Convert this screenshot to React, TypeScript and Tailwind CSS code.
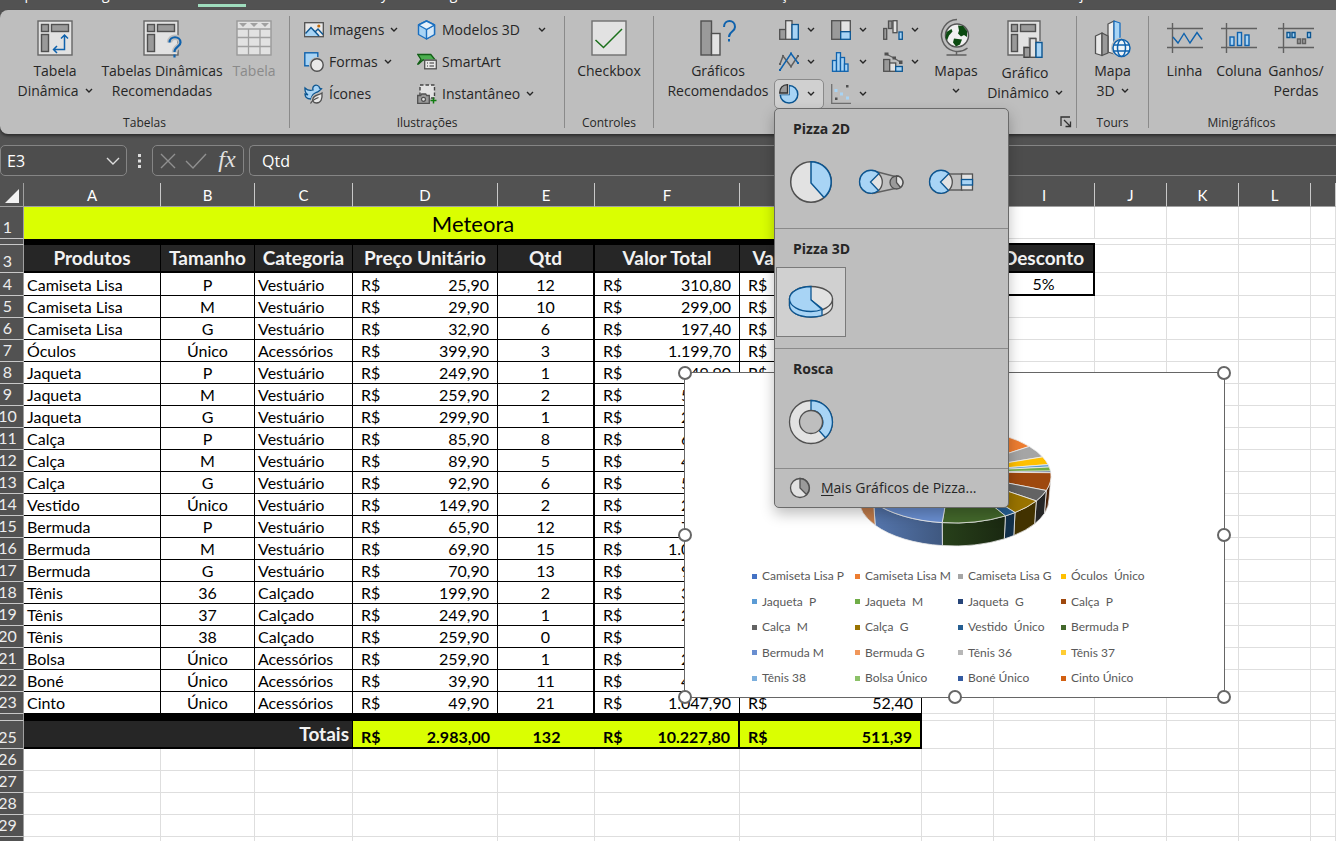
import React from 'react';
import clsx from 'clsx';

const TABS = ['Arquivo', 'Página Inicial', 'Inserir', 'Desenhar', 'Layout da Página', 'Fórmulas', 'Dados', 'Revisão', 'Exibição', 'Automatizar', 'Desenvolvedor', 'Ajuda'];

const PRODUCTS: [string, string, string, number, number][] = [
    ['Camiseta Lisa', 'P', 'Vestuário', 25.9, 12],
    ['Camiseta Lisa', 'M', 'Vestuário', 29.9, 10],
    ['Camiseta Lisa', 'G', 'Vestuário', 32.9, 6],
    ['Óculos', 'Único', 'Acessórios', 399.9, 3],
    ['Jaqueta', 'P', 'Vestuário', 249.9, 1],
    ['Jaqueta', 'M', 'Vestuário', 259.9, 2],
    ['Jaqueta', 'G', 'Vestuário', 299.9, 1],
    ['Calça', 'P', 'Vestuário', 85.9, 8],
    ['Calça', 'M', 'Vestuário', 89.9, 5],
    ['Calça', 'G', 'Vestuário', 92.9, 6],
    ['Vestido', 'Único', 'Vestuário', 149.9, 2],
    ['Bermuda', 'P', 'Vestuário', 65.9, 12],
    ['Bermuda', 'M', 'Vestuário', 69.9, 15],
    ['Bermuda', 'G', 'Vestuário', 70.9, 13],
    ['Tênis', '36', 'Calçado', 199.9, 2],
    ['Tênis', '37', 'Calçado', 249.9, 1],
    ['Tênis', '38', 'Calçado', 259.9, 0],
    ['Bolsa', 'Único', 'Acessórios', 259.9, 1],
    ['Boné', 'Único', 'Acessórios', 39.9, 11],
    ['Cinto', 'Único', 'Acessórios', 49.9, 21],
];

const LEGEND: [string, string][] = [
    ['Camiseta Lisa P', '#4472c4'],
    ['Camiseta Lisa M', '#ed7d31'],
    ['Camiseta Lisa G', '#a5a5a5'],
    ['Óculos  Único', '#ffc000'],
    ['Jaqueta  P', '#5b9bd5'],
    ['Jaqueta  M', '#70ad47'],
    ['Jaqueta  G', '#264478'],
    ['Calça  P', '#9e480e'],
    ['Calça  M', '#636363'],
    ['Calça  G', '#997300'],
    ['Vestido  Único', '#255e91'],
    ['Bermuda P', '#43682b'],
    ['Bermuda M', '#698ed0'],
    ['Bermuda G', '#f1975a'],
    ['Tênis 36', '#b7b7b7'],
    ['Tênis 37', '#ffcd33'],
    ['Tênis 38', '#7cafdd'],
    ['Bolsa Único', '#8cc168'],
    ['Boné Único', '#335aa1'],
    ['Cinto Único', '#d26012'],
];

// half cents round up, as in the sheet
const money = (n: number) => {
    const [int, dec] = (Math.round(n * 100 + 1e-6) / 100).toFixed(2).split('.');
    return int.replace(/\B(?=(\d{3})+$)/g, '.') + ',' + dec;
};

/* ---------- icons ---------- */

const Chevron = ({ className }: { className?: string }) => (
    <svg width="8" height="6" viewBox="0 0 8 6" className={clsx('inline-block shrink-0', className)} fill="none" stroke="currentColor" strokeWidth="1.4">
        <path d="M1 1l3 3 3-3" />
    </svg>
);

const PivotBase = () => (
    <g stroke="#666" strokeWidth="1.4">
        <rect x="1" y="1" width="34" height="34" fill="#e2e2e2" />
        <g fill="#9a9a9a" stroke="#505050">
            <rect x="4.5" y="4.5" width="7" height="7" />
            <rect x="14.5" y="4.5" width="17" height="7" />
            <rect x="4.5" y="14.5" width="7" height="17" />
        </g>
    </g>
);

const PivotTableIcon = () => (
    <svg width="36" height="36" viewBox="0 0 36 36" fill="none">
        <PivotBase />
        <path d="M27.5 15v14.5H17M24 18.5l3.5-3.5 3.5 3.5M20 26l-3.5 3.5 3.5 3.5" stroke="#0f62ad" strokeWidth="1.5" />
    </svg>
);

const PivotSuggestIcon = () => (
    <svg width="38" height="36" viewBox="0 0 38 36" fill="none" className="overflow-visible">
        <PivotBase />
        <path d="M26.5 22.5c0-7 11-7 11 0 0 4.500-6 4-6 10" stroke="#bebebe" strokeWidth="5.5" />
        <path d="M26.500 22.500c0-7 11-7 11 0 0 4.500-6 4-6 9.500M31.500 34.500v3" stroke="#0f62ad" strokeWidth="2.2" />
    </svg>
);

const TableIcon = () => (
    <svg width="36" height="36" viewBox="0 0 36 36" fill="none">
        <rect x="1" y="1" width="34" height="34" fill="#e2e2e2" stroke="#999" strokeWidth="1.4" />
        <path d="M1 9h34M1 17.5h34M1 26.5h34M12.500 9v26M24 9v26" stroke="#a0a0a0" strokeWidth="1.3" />
        <path d="M3 3h8l-4 4zM14 3h8l-4 4zM25 3h8l-4 4z" fill="#a0a0a0" />
    </svg>
);

const ImagesIcon = () => (
    <svg width="20" height="20" viewBox="0 0 20 20" fill="none">
        <rect x=".7" y="2.7" width="18.6" height="14" fill="#e8e8e8" stroke="#505050" strokeWidth="1.3" />
        <path d="M1.5 14.5L7.500 7l8.500 9H1.500z" fill="#a8d4f5" />
        <path d="M1.5 13.5L7 7.500l8 8.500M11 12l3-3 5 5.500" stroke="#0b5591" strokeWidth="1.4" />
        <circle cx="14.8" cy="6" r="1.6" fill="#c26a08" />
    </svg>
);

const ShapesIcon = () => (
    <svg width="20" height="20" viewBox="0 0 20 20" fill="none">
        <rect x=".8" y=".8" width="13" height="13" fill="#a8d4f5" stroke="#0f62ad" strokeWidth="1.4" />
        <circle cx="13" cy="13" r="8" fill="#bebebe" />
        <circle cx="13" cy="13" r="6.2" fill="#e8e8e8" stroke="#505050" strokeWidth="1.4" />
    </svg>
);

const IconsIcon = () => (
    <svg width="20" height="20" viewBox="0 0 20 20" fill="none">
        <path d="M1 4c2.500 2.500 5 3 8 2C8 2.500 11 .5 13.500 1.500c1.500.6 2 1.500 2 2.500l2 .8-2.500 2.200c-1 1-2 1.200-3 1.500-4 1.500-4 3.500-5 6.500-5 0-6-3-6-5 1.500.8 3 .8 3 .8C1.500 9.500.8 6.500 1 4z" fill="#a8d4f5" stroke="#0b5591" strokeWidth="1.3" />
        <path d="M18 9c.5 6-1 10-5.500 10-3 0-4.500-2-3.500-4.500C10 11 14.500 11.500 18 9z" fill="#bebebe" stroke="#bebebe" strokeWidth="3.5" />
        <path d="M18 9c.5 6-1 10-5.500 10-3 0-4.500-2-3.500-4.500C10 11 14.500 11.500 18 9z" fill="#e8e8e8" stroke="#505050" strokeWidth="1.3" />
        <path d="M6.500 19.500c1.500-3 4-4.500 8-6" stroke="#505050" strokeWidth="1.2" />
    </svg>
);

const CubeIcon = () => (
    <svg width="20" height="20" viewBox="0 0 20 20" fill="none" stroke="#1a6fc0" strokeWidth="1.4" strokeLinejoin="round">
        <path d="M9.5 1l8 4v9.500l-8 4.500-8-4.500V5z" fill="#a8d4f5" />
        <path d="M9.5 9.500l8-4.500v9.500l-8 4.500z" fill="#d4e8f8" />
        <path d="M9.5 1l8 4-8 4.500-8-4.500z" fill="#e8f2fa" />
    </svg>
);

const SmartArtIcon = () => (
    <svg width="20" height="20" viewBox="0 0 20 20" fill="none">
        <path d="M.8 2.500h13l4.500 5.500H6l-4.500 4H.8L4 7.500z" fill="#4caf50" stroke="#125f16" strokeWidth="1.3" />
        <rect x="7" y="7.5" width="13" height="10" fill="#bebebe" />
        <rect x="7.7" y="8.2" width="11.6" height="8.6" fill="#e8e8e8" stroke="#505050" strokeWidth="1.3" />
        <path d="M10 11h1M12.500 11H17M10 14h1M12.500 14H17" stroke="#333" strokeWidth="1.2" />
    </svg>
);

const ScreenshotIcon = () => (
    <svg width="20" height="20" viewBox="0 0 20 20" fill="none">
        <rect x="3" y="1" width="14.5" height="13" fill="#e2e2e2" stroke="#444" strokeWidth="1.4" strokeDasharray="3.5 2" />
        <path d="M.7 11.500h3l1-1.500h4l1 1.500h2.600v8H.7z" fill="#9a9a9a" stroke="#505050" strokeWidth="1.3" />
        <circle cx="6.5" cy="15.3" r="2" fill="#e2e2e2" stroke="#505050" strokeWidth="1.2" />
        <path d="M16.500 13.500v6M13.500 16.500h6" stroke="#107c10" strokeWidth="1.5" />
    </svg>
);

const CheckboxIcon = () => (
    <svg width="36" height="36" viewBox="0 0 36 36" fill="none">
        <rect x="1" y="1" width="34" height="34" fill="#e2e2e2" stroke="#707070" strokeWidth="1.4" />
        <path d="M4.500 20l8 7.500L31 9" stroke="#1b701b" strokeWidth="1.5" />
    </svg>
);

const ChartSuggestIcon = () => (
    <svg width="36" height="36" viewBox="0 0 36 36" fill="none">
        <rect x="1" y="1" width="10.5" height="34" fill="#9a9a9a" stroke="#505050" strokeWidth="1.4" />
        <rect x="11.5" y="13.5" width="8.5" height="21.5" fill="#e2e2e2" stroke="#505050" strokeWidth="1.4" />
        <path d="M24 7c0-8 11-8 11 0 0 5-6 4-6 10M29 19v2.500" stroke="#0f62ad" strokeWidth="2" />
    </svg>
);

const MapsIcon = () => (
    <svg width="36" height="36" viewBox="0 0 36 36" fill="none" className="overflow-visible">
        <circle cx="19" cy="15.5" r="11.5" fill="#f0f0f0" stroke="#555" strokeWidth="1.5" />
        <path d="M19-.5A16 16 0 1 0 29.500 28" stroke="#606060" strokeWidth="1.5" />
        <path d="M18.500 31.500V35M8.500 35h20" stroke="#606060" strokeWidth="1.5" />
        <path d="M20 5.500l5 .5 4 5v6l-3-2-3 1.500-3-3 1-3zM8.500 12l5-3 1 2.500-3.500 4-2 5-1.500-3zM16 18.500l8 1-2 5-4 2-3-4z" fill="#0b4a10" />
    </svg>
);

const PivotChartIcon = () => (
    <svg width="36" height="38" viewBox="0 0 36 38" fill="none">
        <path d="M1 1h32v34H1z" fill="#e2e2e2" stroke="#666" strokeWidth="1.4" />
        <g fill="#9a9a9a" stroke="#505050" strokeWidth="1.4">
            <rect x="4.5" y="4.5" width="6" height="7" />
            <rect x="13.5" y="4.5" width="15" height="7" />
            <rect x="4.5" y="14.5" width="6" height="17" />
        </g>
        <path d="M16 26h5v-9h8v4h6v17H16z" fill="#bebebe" />
        <rect x="17" y="27.5" width="6" height="9.8" fill="#9a9a9a" stroke="#404040" strokeWidth="1.4" />
        <rect x="23" y="18.5" width="6" height="18.8" fill="#e2e2e2" stroke="#505050" strokeWidth="1.4" />
        <rect x="29" y="22.5" width="6" height="14.8" fill="#a8d4f5" stroke="#0b5591" strokeWidth="1.4" />
    </svg>
);

const Map3dIcon = () => (
    <svg width="38" height="36" viewBox="0 0 38 36" fill="none" strokeLinejoin="round" className="overflow-visible">
        <path d="M14 4l6-3v33l-6-2z" fill="#f0f0f0" stroke="#555" strokeWidth="1.3" />
        <path d="M20 1l6 2v31h-6z" fill="#a8d4f5" stroke="#1a6fc0" strokeWidth="1.3" />
        <path d="M1.500 16L8 13v22.500l-6.500-2z" fill="#e8e8e8" stroke="#505050" strokeWidth="1.3" />
        <path d="M8 13l6 3v17l-6 2.500z" fill="#9a9a9a" stroke="#505050" strokeWidth="1.3" />
        <circle cx="27.5" cy="28" r="10.5" fill="#bebebe" />
        <g stroke="#0f62ad" strokeWidth="1.5">
            <circle cx="27.5" cy="28" r="8.5" fill="#eef4f8" />
            <ellipse cx="27.5" cy="28" rx="4" ry="8.5" />
            <path d="M19.500 25h16M19.500 31h16" />
        </g>
    </svg>
);

const SparkIcon = ({ kind }: { kind: 'line' | 'column' | 'winloss' }) => (
    <svg width="36" height="36" viewBox="0 0 36 36" fill="none">
        <path d="M0 8.500h36M0 27.500h36M5.500 3v30" stroke="#606060" strokeWidth="1.4" />
        {kind === 'line' && <path d="M6 17l5 6 6-9.500 6 9.500 7-10.500 5 7" stroke="#0f62ad" strokeWidth="1.4" />}
        {kind === 'column' && (
            <g fill="#a8d4f5" stroke="#0f62ad" strokeWidth="1.4">
                <rect x="9" y="17" width="4" height="8.5" />
                <rect x="16.5" y="12.5" width="4" height="13" />
                <rect x="24" y="15" width="4" height="10.5" />
            </g>
        )}
        {kind === 'winloss' && (
            <g strokeWidth="1.4">
                <path d="M9 12.500h3v5H9zM14 12.500h3v5h-3zM29.500 12.500h3v5h-3z" fill="#a8d4f5" stroke="#0b5591" />
                <path d="M19.500 19h3v4.500h-3zM24.500 19h3v4.500h-3z" fill="#9a9a9a" stroke="#606060" />
            </g>
        )}
    </svg>
);

const GRAY = { fill: '#9a9a9a', stroke: '#505050' };
const LIGHT = { fill: '#e2e2e2', stroke: '#505050' };
const BLUE = { fill: '#a8d4f5', stroke: '#0b5591' };

const CHART_TYPES: { name: string; art?: React.ReactNode }[] = [
    {
        name: 'Colunas',
        art: (
            <>
                <rect x=".7" y="9.5" width="6" height="9.8" {...GRAY} />
                <rect x="6.7" y=".7" width="6.3" height="18.6" {...LIGHT} />
                <rect x="13" y="4.5" width="6.3" height="14.8" {...BLUE} />
            </>
        ),
    },
    {
        name: 'Hierarquia',
        art: (
            <>
                <rect x=".7" y=".7" width="9" height="18.6" {...GRAY} />
                <rect x="9.7" y=".7" width="9.6" height="11" {...LIGHT} />
                <rect x="9.7" y="11.7" width="9.6" height="7.6" {...BLUE} />
            </>
        ),
    },
    {
        name: 'Cascata',
        art: (
            <>
                <rect x=".7" y="8.5" width="3" height="10.8" {...GRAY} />
                <rect x="5.5" y="1" width="3.5" height="7.5" {...GRAY} />
                <rect x="10" y=".7" width="4" height="12" {...LIGHT} />
                <rect x="16" y="12" width="3.3" height="7.3" {...BLUE} />
            </>
        ),
    },
    {
        name: 'Linhas',
        art: (
            <g fill="none" strokeWidth="1.5">
                <path d="M1 12l3-8 8 10.500L19 4" stroke="#606060" />
                <path d="M1 18L12 1.500l7 9.500" stroke="#0f62ad" />
                <path d="M0 11h2v2H0zM3 3h2v2H3zM11 13.500h2v2h-2zM18 3h2v2h-2z" fill="#606060" />
                <path d="M0 17h2v2H0zM11 .5h2v2h-2zM18 10h2v2h-2z" fill="#0f62ad" />
            </g>
        ),
    },
    {
        name: 'Estatística',
        art: (
            <g fill="#a8d4f5" stroke="#0f62ad">
                <rect x="1.5" y="8.5" width="4" height="10.8" />
                <rect x="5.5" y=".7" width="4" height="18.6" />
                <rect x="9.5" y="5.5" width="4" height="13.8" />
                <rect x="13.5" y="12" width="3.5" height="7.3" />
            </g>
        ),
    },
    {
        name: 'Combinação',
        art: (
            <>
                <rect x=".7" y="7.5" width="6" height="11.8" {...GRAY} />
                <rect x="6.7" y="11" width="6" height="8.3" {...LIGHT} />
                <rect x="12.7" y="14.5" width="6.6" height="4.8" {...BLUE} />
                <path d="M3 2l8 4 7 4.500" fill="none" stroke="#606060" />
                <path d="M1.500.5h4v3h-4zM9.500 4.500h3.500v3H9.500zM16 8.500h3.500v3.500H16z" fill="#505050" />
            </>
        ),
    },
    {
        name: 'Pizza',
        art: (
            <>
                <path d="M10 1.500A8.800 8.800 0 1 1 1.200 10.500H10z" {...BLUE} strokeWidth="1.5" />
                <path d="M8.500 9H.7C.9 4 4 .9 8.500.7z" fill="#9a9a9a" stroke="#d0d0d0" strokeWidth="3" />
                <path d="M8.500 9H.7C.9 4 4 .9 8.500.7z" fill="#9a9a9a" stroke="#333" />
            </>
        ),
    },
    {
        name: 'Dispersão',
        art: (
            <>
                <path d="M.7 0v19.300H20" fill="none" stroke="#707070" />
                <path d="M15 1h2.500v2.500H15zM4 13.500h2.500V16H4z" fill="#505050" />
                <path d="M3.500 5h3v3h-3zM9 8.500h3v3H9zM15 12.500h3v3h-3z" fill="#a8d4f5" />
            </>
        ),
    },
];

/* ---------- ribbon ---------- */

const Group = ({ label, className, children }: { label: string; className?: string; children: React.ReactNode }) => (
    <section aria-label={label} className="relative flex shrink-0 flex-col">
        <div className={clsx('flex flex-1 items-start', className)}>{children}</div>
        <div className="pb-[3px] text-center text-xs leading-4">{label}</div>
    </section>
);

const Divider = () => <div className="my-1.5 w-px shrink-0 bg-[#8a8a8a]" />;

interface BigButtonProps {
    icon: React.ReactNode;
    lines: string[];
    arrow?: boolean;
    disabled?: boolean;
    className: string;
}

const BigButton = ({ icon, lines, arrow, disabled, className }: BigButtonProps) => (
    <button disabled={disabled} className={clsx('flex shrink-0 flex-col items-center whitespace-nowrap pt-2.5 text-sm leading-5', disabled && 'text-[#8a8a8a]', className)}>
        <span className="mb-[5px] flex items-start justify-center">{icon}</span>
        {lines.map((line, i) => (
            <span key={i} className="flex min-h-5 items-center gap-1.5">
                {line}
                {arrow && i === lines.length - 1 && <Chevron />}
            </span>
        ))}
    </button>
);

const SmallButton = ({ icon, label, arrow, wide }: { icon: React.ReactNode; label: string; arrow?: boolean; wide?: boolean }) => (
    <button className={clsx('flex h-8 items-center whitespace-nowrap text-sm', wide ? 'gap-[18px]' : 'gap-1.5')}>
        <span className="flex items-center gap-[5px]">
            {icon}
            {label}
        </span>
        {arrow && <Chevron />}
    </button>
);

const MenuSection = ({ title, children }: { title: string; children: React.ReactNode }) => (
    <div className="border-b border-[#8a8a8a] px-px pb-[11px]">
        <h3 className="h-[38px] pl-[17px] text-sm font-bold leading-10">{title}</h3>
        <div className="flex">{children}</div>
    </div>
);

const MenuItem = ({ label, selected, children }: { label: string; selected?: boolean; children: React.ReactNode }) => (
    <button
        role="menuitem"
        aria-label={label}
        className={clsx('flex size-[70px] items-center justify-center border', selected ? 'border-[#7a7a7a] bg-[#d0d0d0]' : 'border-transparent')}
    >
        <svg width="46" height="46" viewBox="0 0 46 46" fill="none" strokeWidth="1.3">{children}</svg>
    </button>
);

const PieMenu = () => (
    <div role="menu" className="absolute -left-px top-full z-30 w-[235px] rounded-[5px] border border-[#6a6a6a] bg-[#bebebe] text-left shadow-[0_6px_14px_rgba(0,0,0,0.25)]">
        <MenuSection title="Pizza 2D">
            <MenuItem label="Pizza">
                <circle cx="23" cy="23" r="20.3" {...LIGHT} strokeWidth="1.5" />
                <path d="M23 2.700A20.300 20.300 0 0 1 36 38.500L23 24z" {...BLUE} strokeWidth="1.5" />
            </MenuItem>
            <MenuItem label="Pizza de Pizza">
                <path d="M14 11.500l23 6M14 34.500l23-5" stroke="#606060" />
                <circle cx="13" cy="23" r="11.3" {...LIGHT} />
                <path d="M12.500 23L21 14.500A11.500 11.500 0 1 0 20.500 31.500z" {...BLUE} />
                <circle cx="38.5" cy="23.5" r="6.5" {...GRAY} />
                <path d="M38.500 17a6.500 6.500 0 0 1 4 11.500l-4-5z" {...LIGHT} />
            </MenuItem>
            <MenuItem label="Barra de Pizza">
                <path d="M16 15h18v16H16" stroke="#606060" />
                <circle cx="13" cy="23" r="11.3" {...LIGHT} />
                <path d="M12.500 23L21 14.500A11.500 11.500 0 1 0 20.500 31.500z" {...BLUE} />
                <rect x="33.5" y="15" width="11" height="16" {...LIGHT} />
                <rect x="33.5" y="20.5" width="11" height="5.5" {...BLUE} />
            </MenuItem>
        </MenuSection>
        <MenuSection title="Pizza 3D">
            <MenuItem label="Pizza 3D" selected>
                <path d="M1.500 20v7c1 7 10 11 21.500 11s20.500-4 21.500-11v-7z" {...LIGHT} />
                <ellipse cx="23" cy="20" rx="21.5" ry="12.5" {...LIGHT} />
                <path d="M1.500 20v7c1 7 10 11 21.500 11 4 0 8-.5 11-1.500v-7L23 21z" {...BLUE} />
                <path d="M23 7.500C11 7.500 1.500 13 1.500 20S11 32.500 23 32.500c4 0 8-.7 11-2L23 21z" {...BLUE} />
            </MenuItem>
        </MenuSection>
        <MenuSection title="Rosca">
            <MenuItem label="Rosca">
                <circle cx="23" cy="23" r="21.5" {...LIGHT} />
                <path d="M23 1.500A21.500 21.500 0 0 1 37.500 38.800L31 31.500A11.500 11.500 0 0 0 23 11.500z" {...BLUE} />
                <circle cx="23" cy="23" r="11.5" fill="#bebebe" stroke="#505050" />
            </MenuItem>
        </MenuSection>
        <button role="menuitem" className="flex h-[38px] w-full items-center gap-2.5 pl-3.5 text-sm">
            <svg width="22" height="22" viewBox="0 0 22 22" fill="none" strokeWidth="1.3">
                <circle cx="11" cy="11" r="9.5" {...LIGHT} />
                <path d="M11 1.500a9.500 9.500 0 0 1 6.500 16L11 11z" {...GRAY} />
            </svg>
            <span><u className="underline-offset-2">M</u>ais Gráficos de Pizza...</span>
        </button>
    </div>
);

const ChartTypeButton = ({ name, art }: { name: string; art?: React.ReactNode }) => {
    const open = name === 'Pizza';
    return (
        <div className={clsx('relative h-[30px] w-[50px] rounded-[5px] border', open ? 'border-[#8a8a8a] bg-[#d0d0d0]' : 'border-transparent')}>
            <button aria-label={name} className="flex h-full w-full items-center gap-2 pl-1">
                <svg width="20" height="20" viewBox="0 0 20 20" strokeWidth="1.3">{art}</svg>
                <Chevron />
            </button>
            {open && <PieMenu />}
        </div>
    );
};

const Ribbon = () => (
    <div className="relative z-20 flex h-[124px] shrink-0 rounded-l-lg bg-[#bebebe] text-[#262626] shadow-[0_2px_3px_rgba(0,0,0,0.45)]">
        <Group label="Tabelas" className="w-[289px] pl-2.5">
            <BigButton icon={<PivotTableIcon />} lines={['Tabela', 'Dinâmica']} arrow className="w-[90px]" />
            <BigButton icon={<PivotSuggestIcon />} lines={['Tabelas Dinâmicas', 'Recomendadas']} className="w-[124px]" />
            <BigButton icon={<TableIcon />} lines={['Tabela']} disabled className="w-[60px]" />
        </Group>
        <Divider />
        <Group label="Ilustrações" className="w-[274px] pl-3.5 pt-1">
            <div className="w-[113px]">
                <SmallButton icon={<ImagesIcon />} label="Imagens" arrow />
                <SmallButton icon={<ShapesIcon />} label="Formas" arrow />
                <SmallButton icon={<IconsIcon />} label="Ícones" />
            </div>
            <div>
                <SmallButton icon={<CubeIcon />} label="Modelos 3D" arrow wide />
                <SmallButton icon={<SmartArtIcon />} label="SmartArt" />
                <SmallButton icon={<ScreenshotIcon />} label="Instantâneo" arrow />
            </div>
        </Group>
        <Divider />
        <Group label="Controles">
            <BigButton icon={<CheckboxIcon />} lines={['Checkbox']} className="w-[88px]" />
        </Group>
        <Divider />
        <Group label="Gráficos" className="w-[422px] pl-2">
            <BigButton icon={<ChartSuggestIcon />} lines={['Gráficos', 'Recomendados']} className="w-28" />
            <div className="grid grid-cols-[repeat(3,52px)] gap-y-0.5 pt-[5px]">
                {CHART_TYPES.map(type => <ChartTypeButton key={type.name} {...type} />)}
            </div>
            <BigButton icon={<MapsIcon />} lines={['Mapas', '']} arrow className="w-[52px]" />
            <BigButton icon={<PivotChartIcon />} lines={['Gráfico', 'Dinâmico']} arrow className="w-[86px]" />
            <button aria-label="Mais opções de gráficos" className="absolute bottom-1.5 right-1">
                <svg width="12" height="12" viewBox="0 0 12 12" fill="none" stroke="#333" strokeWidth="1.3">
                    <path d="M1 10V1h9M4 4l6 6M10.500 5.500v5h-5" />
                </svg>
            </button>
        </Group>
        <Divider />
        <Group label="Tours">
            <BigButton icon={<Map3dIcon />} lines={['Mapa', '3D']} arrow className="w-[71px]" />
        </Group>
        <Divider />
        <Group label="Minigráficos" className="px-2">
            <BigButton icon={<SparkIcon kind="line" />} lines={['Linha']} className="w-[55px]" />
            <BigButton icon={<SparkIcon kind="column" />} lines={['Coluna']} className="w-[54px]" />
            <BigButton icon={<SparkIcon kind="winloss" />} lines={['Ganhos/', 'Perdas']} className="w-[60px]" />
        </Group>
    </div>
);

const FormulaBar = () => (
    <div className="flex h-[49px] shrink-0 items-center pt-1 text-base text-white">
        <div className="flex h-[31px] w-[127px] items-center rounded-[5px] border border-[#858585] bg-[#4d4d4d] px-1.5">
            <input aria-label="Caixa de nome" defaultValue="E3" className="w-full min-w-0 bg-transparent outline-none" />
            <button aria-label="Abrir lista de nomes">
                <svg width="14" height="8" viewBox="0 0 14 8" fill="none" stroke="#ddd" strokeWidth="1.4"><path d="M1 1l6 6 6-6" /></svg>
            </button>
        </div>
        <svg width="25" height="16" viewBox="0 0 25 16" fill="#ddd" className="shrink-0">
            <path d="M11 1h3v3h-3zM11 6.500h3v3h-3zM11 12h3v3h-3z" />
        </svg>
        <div className="flex h-[31px] w-[92px] shrink-0 items-center justify-between rounded-[5px] border border-[#858585] bg-[#4d4d4d] pl-1.5 pr-1">
            <button aria-label="Cancelar">
                <svg width="18" height="18" viewBox="0 0 18 18" stroke="#909090" strokeWidth="1.4"><path d="M2 2l14 14M16 2L2 16" /></svg>
            </button>
            <button aria-label="Inserir">
                <svg width="22" height="18" viewBox="0 0 22 18" fill="none" stroke="#909090" strokeWidth="1.4"><path d="M1 9l7 7L21 2" /></svg>
            </button>
            <button aria-label="Inserir função" className="w-6 pb-1 font-['Liberation_Serif',serif] text-[24px] italic leading-6 text-[#e0e0e0]">fx</button>
        </div>
        <input
            aria-label="Barra de fórmulas"
            defaultValue="Qtd"
            className="ml-[5px] h-[31px] min-w-0 flex-1 rounded-l-[5px] border border-r-0 border-[#858585] bg-[#4d4d4d] px-3 outline-none"
        />
    </div>
);

/* ---------- chart ---------- */

// Boundaries of each slice in degrees, clockwise from 3 o'clock
const SLICES: [number, number, string, string][] = [
    [-102, -77, '#4472c4', '#2a4677'],
    [-77, -39, '#ed7d31', '#8a4516'],
    [-39, -24, '#a5a5a5', '#5a5a5a'],
    [-24, -14, '#ffc000', '#8f6b00'],
    [-14, -11, '#5b9bd5', '#2f5574'],
    [-11, -6, '#70ad47', '#3b5c25'],
    [-6, -4, '#264478', '#14243f'],
    [-4, 18, '#9e480e', '#4a2106'],
    [18, 32, '#636363', '#262626'],
    [32, 51, '#997300', '#423200'],
    [51, 58, '#255e91', '#12304a'],
    [58, 97, '#43682b', 'url(#wallGreen)'],
    [97, 146, '#698ed0', 'url(#wallBlue)'],
    [146, 188, '#f1975a', '#c27c4a'],
    [188, 205, '#b7b7b7', '#777777'],
    [205, 215, '#ffcd33', '#a58220'],
    [215, 225, '#8cc168', '#587a41'],
    [225, 238, '#335aa1', '#203866'],
    [238, 258, '#d26012', '#7c390a'],
];

const point = (deg: number, rx: number, ry: number, cy: number) => {
    const t = (deg * Math.PI) / 180;
    return `${(269 + rx * Math.cos(t)).toFixed(1)} ${(cy + ry * Math.sin(t)).toFixed(1)}`;
};

const PieChart3D = () => (
    <svg viewBox="0 0 539 190" className="h-[190px] w-full shrink-0" role="img" aria-label="Gráfico de pizza 3D">
        <defs>
            <linearGradient id="wallGreen">
                <stop offset="0" stopColor="#27401a" />
                <stop offset="1" stopColor="#1a2811" />
            </linearGradient>
            <linearGradient id="wallBlue">
                <stop offset="0" stopColor="#5576ad" />
                <stop offset="1" stopColor="#3f5880" />
            </linearGradient>
        </defs>
        {SLICES.filter(([, end]) => end > 0 && end < 189).map(([start, end, , wall]) => {
            const from = Math.max(start, 0);
            const to = Math.min(end, 180);
            return (
                <path
                    key={start}
                    d={`M${point(from, 97, 47, 103)}A97 47 0 0 1 ${point(to, 97, 47, 103)}L${point(to, 95, 47, 126)}A95 47 0 0 0 ${point(from, 95, 47, 126)}z`}
                    fill={wall}
                    stroke="#e8e8e8"
                    strokeWidth="0.8"
                />
            );
        })}
        {SLICES.map(([start, end, top]) => (
            <path key={start} d={`M266 99L${point(start, 97, 47, 103)}A97 47 0 0 1 ${point(end, 97, 47, 103)}z`} fill={top} stroke="#f0f0f0" strokeWidth="0.8" />
        ))}
    </svg>
);

const HANDLES = [
    'left-0 top-0', 'left-1/2 top-0', 'left-full top-0',
    'left-0 top-1/2', 'left-full top-1/2',
    'left-0 top-full', 'left-1/2 top-full', 'left-full top-full',
];

const ChartObject = () => (
    <div className="absolute left-[684px] top-[189px] z-10 h-[326px] w-[541px] border border-[#666] bg-white">
        <PieChart3D />
        <ul className="mt-[3px] grid h-[122px] grid-cols-[repeat(4,103px)] content-between pl-[67px] text-xs leading-5 text-[#595959]">
            {LEGEND.map(([name, color]) => (
                <li key={name} className="flex items-center gap-[5px] whitespace-pre">
                    <span className="size-[5px] shrink-0" style={{ backgroundColor: color }} />
                    {name}
                </li>
            ))}
        </ul>
        {HANDLES.map(pos => (
            <span key={pos} className={clsx('absolute size-3.5 -translate-x-1/2 -translate-y-1/2 rounded-full border-2 border-[#666] bg-white', pos)} />
        ))}
    </div>
);

/* ---------- grid ---------- */

const COLUMNS = ['A', 'B', 'C', 'D', 'E', 'F', 'G', 'H', 'I', 'J', 'K', 'L', 'M'];

const RowHead = ({ children }: { children?: React.ReactNode }) => (
    <th scope="row" className="border-b border-r border-b-[#c8c8c8] border-r-[#a0a0a0] bg-[#525252] pr-2 pb-px text-center align-bottom font-normal leading-5 text-[#ececec]">
        <span className="flex justify-center">{children}</span>
    </th>
);

const Blank = ({ count }: { count: number }) => (
    <>
        {Array.from({ length: count }, (_, i) => <td key={i} className="border-b border-r border-[#dedede]" />)}
    </>
);

const Money = ({ value, className = 'border-r' }: { value: number; className?: string }) => (
    <td className={clsx('border-b border-black px-2 align-bottom', className)}>
        <span className="flex justify-between leading-5"><span>R$</span><span>{money(value)}</span></span>
    </td>
);

const Sheet = () => {
    const heading = 'border-b-2 border-black bg-[#262626] text-[19px] font-bold leading-6 text-[#f2f2f2]';
    const totals = 'border-b-2 bg-[#daff01]';
    return (
        <div className="relative min-h-0 flex-1 overflow-hidden bg-white font-['Lato',sans-serif] text-base leading-5 text-black">
            <table className="w-full min-w-[1336px] table-fixed border-separate border-spacing-0 whitespace-nowrap">
                <colgroup>
                    <col className="w-6" />
                    <col className="w-[137px]" />
                    <col className="w-[94px]" />
                    <col className="w-[98px]" />
                    <col className="w-[145px]" />
                    <col className="w-[97px]" />
                    <col className="w-[145px]" />
                    <col className="w-[182px]" />
                    <col className="w-[72px]" />
                    <col className="w-[101px]" />
                    <col className="w-[72px]" />
                    <col className="w-[72px]" />
                    <col className="w-[72px]" />
                    <col />
                </colgroup>
                <thead>
                    <tr className="h-6 bg-[#525252] text-[15px] leading-5 text-white">
                        <th className="border-b border-r border-[#a0a0a0] align-bottom">
                            <svg width="16" height="16" viewBox="0 0 16 16" className="mb-0.5 ml-1"><path d="M15 1v14H1z" fill="#f2f2f2" /></svg>
                        </th>
                        {COLUMNS.map(col => (
                            <th key={col} scope="col" className="border-b border-r border-b-[#a0a0a0] border-r-[#c8c8c8] font-normal">{col === 'M' ? '' : col}</th>
                        ))}
                    </tr>
                </thead>
                <tbody>
                    <tr className="h-8">
                        <RowHead>1</RowHead>
                        <td colSpan={7} className="bg-[#daff01] pt-0.5 text-center text-[22px] leading-7">Meteora</td>
                        <Blank count={6} />
                    </tr>
                    <tr className="h-1.5">
                        <RowHead />
                        <td colSpan={7} className="bg-black" />
                        <Blank count={1} />
                        <td className="border-b-2 border-black" />
                        <Blank count={4} />
                    </tr>
                    <tr className="h-7">
                        <RowHead>3</RowHead>
                        <td className={clsx(heading, 'border-r text-center')}>Produtos</td>
                        <td className={clsx(heading, 'border-r text-center')}>Tamanho</td>
                        <td className={clsx(heading, 'border-r text-center')}>Categoria</td>
                        <td className={clsx(heading, 'border-r text-center')}>Preço Unitário</td>
                        <td className={clsx(heading, 'border-r-2 text-center')}>Qtd</td>
                        <td className={clsx(heading, 'border-r text-center')}>Valor Total</td>
                        <td className={clsx(heading, 'border-r text-center')}>Valor do Desconto</td>
                        <Blank count={1} />
                        <td className={clsx(heading, 'border-r-2 text-center')}>Desconto</td>
                        <Blank count={4} />
                    </tr>
                    {PRODUCTS.map(([name, size, category, price, qty], i) => (
                        <tr key={i} className={i === 0 ? 'h-[23px]' : 'h-[22px]'}>
                            <RowHead>{i + 4}</RowHead>
                            <td className="border-b border-r border-black px-[3px] align-bottom">{name}</td>
                            <td className="border-b border-r border-black text-center align-bottom">{size}</td>
                            <td className="border-b border-r border-black px-[3px] align-bottom">{category}</td>
                            <Money value={price} />
                            <td className="border-b border-r-2 border-black text-center align-bottom">{qty}</td>
                            <Money value={price * qty} />
                            <Money value={price * qty * 0.05} />
                            <Blank count={1} />
                            {i === 0
                                ? <td className="border-b-2 border-r-2 border-black text-center align-bottom">5%</td>
                                : <Blank count={1} />}
                            <Blank count={4} />
                        </tr>
                    ))}
                    <tr className="h-[7px]">
                        <RowHead />
                        <td colSpan={7} className="bg-black" />
                        <Blank count={6} />
                    </tr>
                    <tr className="h-7 font-bold">
                        <RowHead>25</RowHead>
                        <td colSpan={3} className="border-b-2 border-r border-black bg-[#262626] px-[3px] text-right text-[19px] leading-6 text-[#f2f2f2]">Totais</td>
                        <Money value={2983} className={totals} />
                        <td className={clsx(totals, 'border-black text-center align-bottom')}>132</td>
                        <Money value={10227.8} className={clsx(totals, 'border-r-2')} />
                        <Money value={511.39} className={clsx(totals, 'border-r-2')} />
                        <Blank count={6} />
                    </tr>
                    {[26, 27, 28, 29, 30].map(n => (
                        <tr key={n} className="h-[22px]">
                            <RowHead>{n === 30 ? '' : n}</RowHead>
                            <Blank count={13} />
                        </tr>
                    ))}
                </tbody>
            </table>
            <ChartObject />
        </div>
    );
};

export default function App() {
    return (
        <div className="flex h-screen flex-col overflow-hidden bg-[#525252] font-['Open_Sans',sans-serif]">
            <nav className="flex h-2.5 shrink-0 items-end gap-6 overflow-hidden pl-0.5 text-sm leading-5 text-white">
                {TABS.map(tab => (
                    <a key={tab} href="#" className={clsx('mb-[3px] whitespace-nowrap border-b-[3px] px-[3px]', tab === 'Inserir' ? 'border-[#9fdcbd]' : 'border-transparent')}>{tab}</a>
                ))}
            </nav>
            <Ribbon />
            <FormulaBar />
            <Sheet />
        </div>
    );
}
